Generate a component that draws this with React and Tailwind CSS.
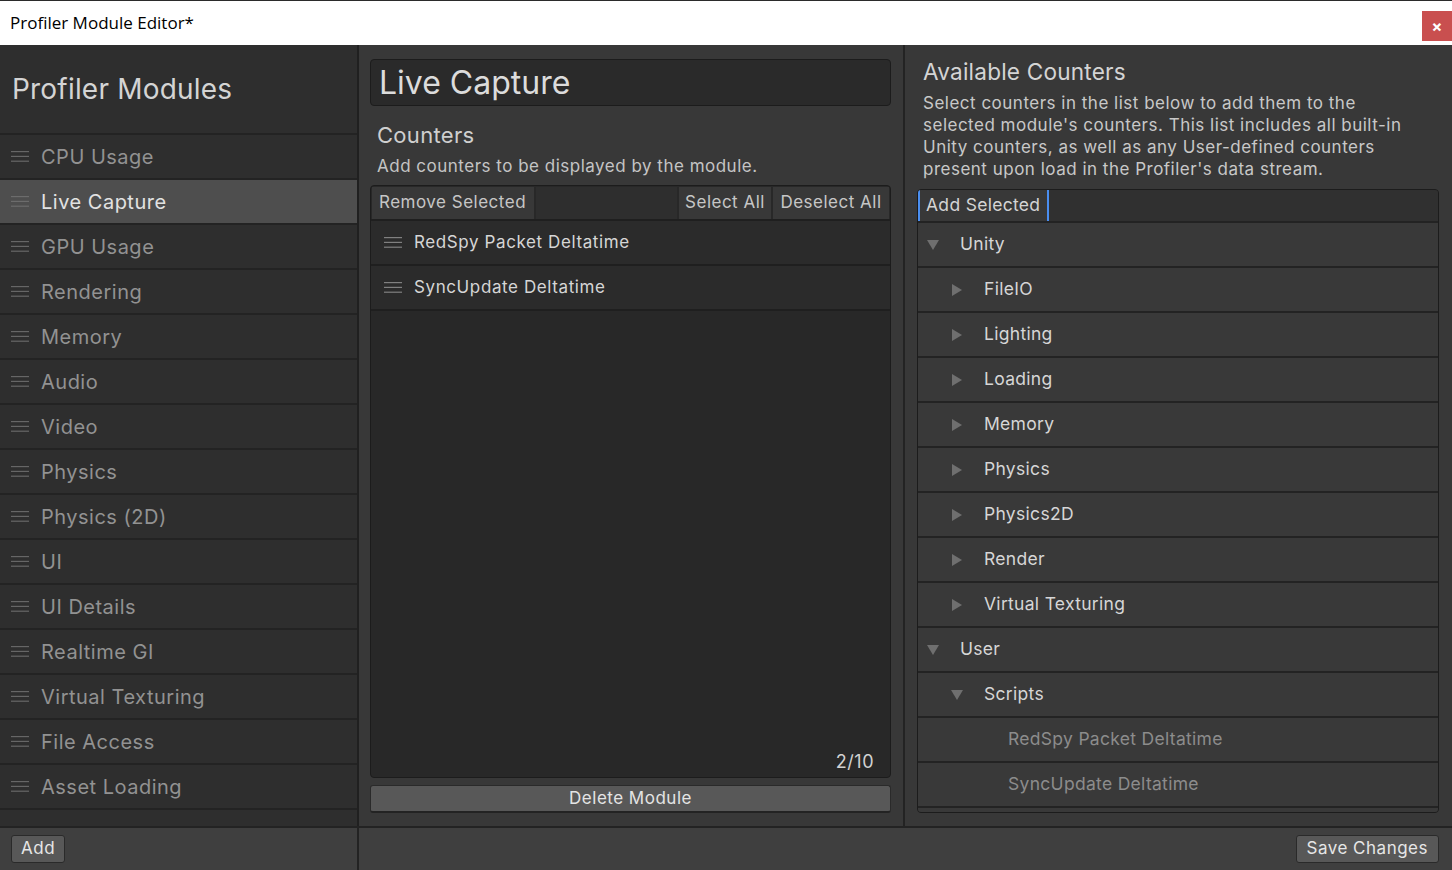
import React from 'react';

const modules = [
    'CPU Usage', 'Live Capture', 'GPU Usage', 'Rendering', 'Memory', 'Audio', 'Video',
    'Physics', 'Physics (2D)', 'UI', 'UI Details', 'Realtime GI', 'Virtual Texturing',
    'File Access', 'Asset Loading',
];

const tree = [
    { label: 'Unity', depth: 0, arrow: 'down' },
    { label: 'FileIO', depth: 1, arrow: 'right' },
    { label: 'Lighting', depth: 1, arrow: 'right' },
    { label: 'Loading', depth: 1, arrow: 'right' },
    { label: 'Memory', depth: 1, arrow: 'right' },
    { label: 'Physics', depth: 1, arrow: 'right' },
    { label: 'Physics2D', depth: 1, arrow: 'right' },
    { label: 'Render', depth: 1, arrow: 'right' },
    { label: 'Virtual Texturing', depth: 1, arrow: 'right' },
    { label: 'User', depth: 0, arrow: 'down' },
    { label: 'Scripts', depth: 1, arrow: 'down' },
    { label: 'RedSpy Packet Deltatime', depth: 2, leaf: true },
    { label: 'SyncUpdate Deltatime', depth: 2, leaf: true },
];

function Grip({ className }) {
    return (
        <svg width="18" height="11" viewBox="0 0 18 11" className={className}>
            <rect x="0" y="0" width="18" height="1.2" fill="currentColor" />
            <rect x="0" y="4.8" width="18" height="1.2" fill="currentColor" />
            <rect x="0" y="9.6" width="18" height="1.2" fill="currentColor" />
        </svg>
    );
}

function Arrow({ dir }) {
    return (
        <svg width="12" height="12" viewBox="0 0 12 12" className="text-[#6f6f6f] shrink-0">
            {dir === 'down'
                ? <path d="M0 1 L12 1 L6 11 Z" fill="currentColor" />
                : <path d="M1 0 L11 6 L1 12 Z" fill="currentColor" />}
        </svg>
    );
}

export default function App() {
    return (
        <div className="w-full h-[870px] flex flex-col overflow-hidden tracking-[0.5px]" style={{ fontFamily: 'Inter, "Noto Sans", sans-serif' }}>
            {/* Title bar */}
            <div className="h-[45px] shrink-0 bg-white border-t border-[#2b2b2b] flex items-start justify-between tracking-normal">
                <div className="pl-[10px] pt-[9px] text-[17px] text-black leading-[26px]" style={{ fontFamily: '"Open Sans", Inter, sans-serif' }}>Profiler Module Editor*</div>
                <div className="mt-[10px] w-[30px] h-[30px] bg-[#c94f4f] flex items-center justify-center text-white text-[16px] font-bold leading-none">×</div>
            </div>

            <div className="flex-1 flex min-h-0">
                {/* Left: module list */}
                <div className="w-[359px] shrink-0 bg-[#2e2e2e] border-r-2 border-[#202020] flex flex-col">
                    <div className="h-[88px] shrink-0 pl-[12px] pt-[26px] text-[28px] text-[#d4d4d4] leading-[36px] tracking-[0.2px]">Profiler Modules</div>
                    <div className="flex flex-col">
                        {modules.map((m) => {
                            const sel = m === 'Live Capture';
                            return (
                                <div key={m} className={`h-[45px] border-t-2 border-[#232323] flex items-center gap-[12px] pl-[11px] ${sel ? 'bg-[#4e4e4e]' : ''}`}>
                                    <Grip className={sel ? 'text-[#6c6c6c]' : 'text-[#666666]'} />
                                    <span className={`text-[20px] ${sel ? 'text-[#e2e2e2]' : 'text-[#929292]'}`}>{m}</span>
                                </div>
                            );
                        })}
                        <div className="border-t-2 border-[#232323]" />
                    </div>
                </div>

                {/* Middle: selected module */}
                <div className="w-[546px] shrink-0 bg-[#383838] border-r-2 border-[#232323] flex flex-col pl-[11px] pr-[12px] pt-[14px] pb-[13px]">
                    <div className="h-[47px] shrink-0 bg-[#2a2a2a] border border-[#1c1c1c] rounded-[4px] flex items-center pl-[8px] text-[32px] text-[#dcdcdc] tracking-normal">Live Capture</div>
                    <div className="pl-[7px] mt-[15px] text-[22px] text-[#cfcfcf] leading-[28px] tracking-[0.3px]">Counters</div>
                    <div className="pl-[7px] mt-[5px] text-[17px] text-[#c4c4c4] leading-[24px]">Add counters to be displayed by the module.</div>
                    <div className="mt-[7px] flex-1 bg-[#282828] border border-[#1c1c1c] rounded-[4px] flex flex-col overflow-hidden">
                        <div className="h-[33px] shrink-0 flex gap-[2px] p-[1px] pb-0 text-[17px] text-[#c6c6c6]">
                            <div className="w-[162px] bg-[#383838] flex items-center pl-[7px]">Remove Selected</div>
                            <div className="flex-1 bg-[#2e2e2e]" />
                            <div className="w-[92px] bg-[#383838] flex items-center justify-center">Select All</div>
                            <div className="w-[116px] bg-[#383838] flex items-center justify-center">Deselect All</div>
                        </div>
                        {['RedSpy Packet Deltatime', 'SyncUpdate Deltatime'].map((c) => (
                            <div key={c} className="h-[45px] shrink-0 bg-[#2b2b2b] border-t-2 border-[#1f1f1f] flex items-center gap-[12px] pl-[13px] text-[17px] text-[#d6d6d6] tracking-[0.6px]">
                                <Grip className="text-[#808080]" />
                                <span>{c}</span>
                            </div>
                        ))}
                        <div className="border-t-2 border-[#1f1f1f] flex-1 flex items-end justify-end pr-[16px] pb-[2px]">
                            <span className="text-[18px] text-[#d2d2d2]">2/10</span>
                        </div>
                    </div>
                    <div className="mt-[7px] h-[28px] shrink-0 bg-[#585858] border border-[#2a2a2a] border-b-2 border-b-[#232323] rounded-[3px] flex items-center justify-center text-[17px] text-[#e4e4e4]">Delete Module</div>
                </div>

                {/* Right: available counters */}
                <div className="flex-1 bg-[#383838] flex flex-col pl-[12px] pr-[13px] pt-[13px] pb-[13px]">
                    <div className="pl-[6px] text-[22.6px] text-[#d4d4d4] leading-[28px] tracking-[0.2px]">Available Counters</div>
                    <div className="pl-[6px] pr-[30px] mt-[6px] text-[17px] text-[#c8c8c8] leading-[22px]">
                        Select counters in the list below to add them to the selected module's counters. This list includes all built-in Unity counters, as well as any User-defined counters present upon load in the Profiler's data stream.
                    </div>
                    <div className="mt-[9px] flex-1 bg-[#2c2c2c] border border-[#1c1c1c] rounded-[4px] flex flex-col overflow-hidden">
                        <div className="h-[31px] shrink-0 bg-[#303030] flex">
                            <div className="w-[131px] border-x-2 border-[#4a8ef0] bg-[#383838] flex items-center pl-[6px] text-[17.5px] text-[#d4d4d4] tracking-[0.3px]">Add Selected</div>
                        </div>
                        {tree.map((n, i) => (
                            <div key={i} className="h-[45px] shrink-0 bg-[#393939] border-t-2 border-[#232323] flex items-center">
                                <div className={`flex items-center ${n.depth === 0 ? 'pl-[9px]' : n.depth === 1 ? 'pl-[33px]' : 'pl-[57px]'}`}>
                                    {n.leaf ? <div className="w-[12px]" /> : <Arrow dir={n.arrow} />}
                                    <span className={`ml-[21px] text-[17.5px] tracking-[0.3px] ${n.leaf ? 'text-[#8c8c8c]' : 'text-[#d6d6d6]'}`}>{n.label}</span>
                                </div>
                            </div>
                        ))}
                        <div className="border-t-2 border-[#232323] flex-1 bg-[#393939]" />
                    </div>
                </div>
            </div>

            {/* Footer */}
            <div className="h-[44px] shrink-0 bg-[#3f3f3f] border-t-2 border-[#232323] flex">
                <div className="w-[359px] shrink-0 border-r-2 border-[#232323] flex items-center pl-[11px]">
                    <div className="h-[28px] px-[9px] bg-[#585858] border border-[#2a2a2a] rounded-[3px] flex items-center text-[17px] text-[#e6e6e6]">Add</div>
                </div>
                <div className="flex-1 flex items-center justify-end pr-[13px]">
                    <div className="h-[28px] px-[10px] bg-[#585858] border border-[#2a2a2a] rounded-[3px] flex items-center text-[17px] text-[#e6e6e6]">Save Changes</div>
                </div>
            </div>
        </div>
    );
}
